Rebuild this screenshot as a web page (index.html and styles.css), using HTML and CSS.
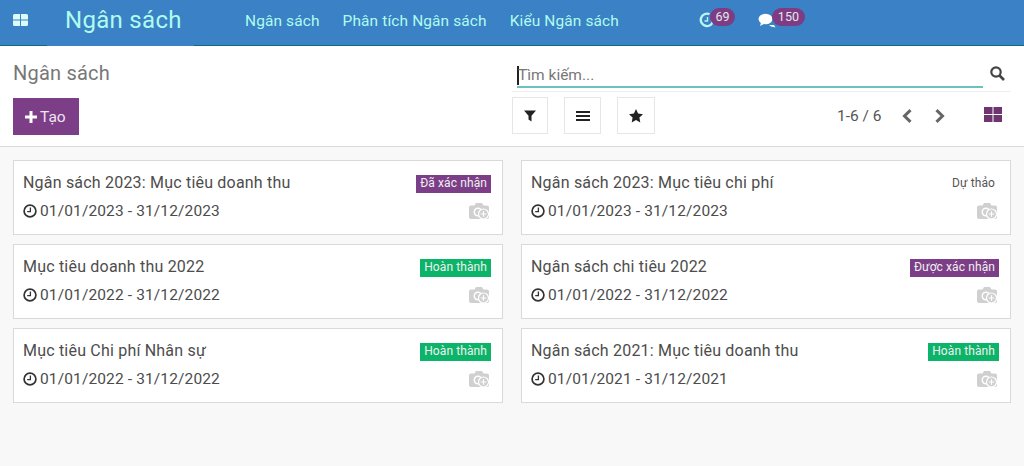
FILE: index.html
```html
<!DOCTYPE html>
<html lang="vi">
<head>
<meta charset="utf-8">
<title>Ngân sách</title>
<link rel="stylesheet" href="styles.css">
</head>
<body>
<svg class="defs" width="0" height="0" aria-hidden="true">
  <symbol id="clock" viewBox="0 0 14 14"><circle cx="7" cy="7" r="5.900" fill="none" stroke="currentColor" stroke-width="1.700"/><path d="M7.400 3.400V7.700H4.200" fill="none" stroke="currentColor" stroke-width="1.300"/></symbol>
  <symbol id="cam" viewBox="0 0 22 18"><path d="M1 5.500a2 2 0 0 1 2-2h3.500L8 1h6l1.500 2.500H19a2 2 0 0 1 2 2V15a2 2 0 0 1-2 2H3a2 2 0 0 1-2-2Z" fill="#d0d0d0"/><circle cx="10" cy="10" r="4.500" fill="#fff"/><circle cx="10" cy="10" r="3" fill="#d0d0d0"/><circle cx="15.500" cy="12" r="5" fill="#d0d0d0" stroke="#fff" stroke-width="1.200"/><path d="M15.500 9.300v5.400M12.800 12h5.400" stroke="#fff" stroke-width="1.200"/></symbol>
</svg>
<header class="navbar">
  <svg class="apps" viewBox="0 0 15 12"><path d="M0 1.500A1.500 1.500 0 0 1 1.500 0H7V5.500H0ZM8 0H13.500A1.500 1.500 0 0 1 15 1.500V5.500H8ZM0 6.500H7V12H1.500A1.500 1.500 0 0 1 0 10.500ZM8 6.500H15V10.500A1.500 1.500 0 0 1 13.500 12H8Z" fill="#dcfbf8"/></svg>
  <div class="brand">Ngân sách</div>
  <nav class="menu"><a>Ngân sách</a><a>Phân tích Ngân sách</a><a>Kiểu Ngân sách</a></nav>
  <div class="systray">
    <div class="tray tray-activity">
      <svg class="tray-clock" viewBox="0 0 16 16"><path d="M10.500 2.200A6.200 6.200 0 1 0 14.200 8" fill="none" stroke="#b9f6ee" stroke-width="2.400"/><path d="M8.500 5V9H5.500" fill="none" stroke="#b9f6ee" stroke-width="1.400"/></svg>
      <span class="count count-a">69</span>
    </div>
    <div class="tray tray-chat">
      <svg class="tray-bubble" viewBox="0 0 18 15"><ellipse cx="7.500" cy="6" rx="7" ry="5.200" fill="#fff"/><path d="M3 9.500 2 13l5-2.500ZM11 12h5l1.500 2.500L13 13.500Z" fill="#e8fffb"/></svg>
      <span class="count count-b">150</span>
    </div>
  </div>
</header>
<section class="panel">
  <div class="panel-left">
    <h1 class="crumb">Ngân sách</h1>
    <button class="create"><svg class="plus" viewBox="0 0 12 12"><path d="M4.500 0h3v4.500H12v3H7.500V12h-3V7.500H0v-3h4.500Z" fill="#fff"/></svg>Tạo</button>
  </div>
  <div class="panel-right">
    <div class="search">
      <div class="search-field"><span class="caret"></span><span class="placeholder">Tìm kiếm...</span></div>
      <svg class="search-icon" viewBox="0 0 15 15"><circle cx="6" cy="6" r="4.700" fill="none" stroke="#444" stroke-width="2.200"/><path d="M9.500 9.500 14 14" stroke="#444" stroke-width="2.600"/></svg>
    </div>
    <div class="tools">
      <button class="tool tool-filter"><svg viewBox="0 0 12 12"><path d="M0 0.500H12L7.500 5.800V11.500L4.500 9.500V5.800Z" fill="#222"/></svg></button>
      <button class="tool tool-group"><svg viewBox="0 0 14 12"><path d="M0 1h14v2H0ZM0 5h14v2H0ZM0 9h14v2H0Z" fill="#222"/></svg></button>
      <button class="tool tool-fav"><svg viewBox="0 0 14 14"><path d="M7 0 9.100 4.500 14 5.200 10.400 8.500 11.300 13.500 7 11 2.700 13.500 3.600 8.500 0 5.200 4.900 4.500Z" fill="#222"/></svg></button>
      <span class="pager">1-6 / 6</span>
      <svg class="chev chev-l" viewBox="0 0 10 14"><path d="M8.500 1.200 2.500 7 8.500 12.800" fill="none" stroke="#666" stroke-width="3"/></svg>
      <svg class="chev chev-r" viewBox="0 0 10 14"><path d="M1.500 1.200 7.500 7 1.500 12.800" fill="none" stroke="#666" stroke-width="3"/></svg>
      <svg class="kanban" viewBox="0 0 18 15"><path d="M0 0H8.500V7H0ZM9.500 0H18V7H9.500ZM0 8H8.500V15H0ZM9.500 8H18V15H9.500Z" fill="#6f3570"/></svg>
    </div>
  </div>
</section>
<main class="cards">
  <article class="card"><div class="row"><h2 class="title">Ngân sách 2023: Mục tiêu doanh thu</h2><span class="tag tag-purple">Đã xác nhận</span></div><div class="row row-date"><span class="date"><svg class="clock"><use href="#clock"/></svg>01/01/2023 - 31/12/2023</span><svg class="cam"><use href="#cam"/></svg></div></article>
  <article class="card"><div class="row"><h2 class="title">Ngân sách 2023: Mục tiêu chi phí</h2><span class="tag tag-plain">Dự thảo</span></div><div class="row row-date"><span class="date"><svg class="clock"><use href="#clock"/></svg>01/01/2023 - 31/12/2023</span><svg class="cam"><use href="#cam"/></svg></div></article>
  <article class="card"><div class="row"><h2 class="title">Mục tiêu doanh thu 2022</h2><span class="tag tag-green">Hoàn thành</span></div><div class="row row-date"><span class="date"><svg class="clock"><use href="#clock"/></svg>01/01/2022 - 31/12/2022</span><svg class="cam"><use href="#cam"/></svg></div></article>
  <article class="card"><div class="row"><h2 class="title">Ngân sách chi tiêu 2022</h2><span class="tag tag-purple">Được xác nhận</span></div><div class="row row-date"><span class="date"><svg class="clock"><use href="#clock"/></svg>01/01/2022 - 31/12/2022</span><svg class="cam"><use href="#cam"/></svg></div></article>
  <article class="card"><div class="row"><h2 class="title">Mục tiêu Chi phí Nhân sự</h2><span class="tag tag-green">Hoàn thành</span></div><div class="row row-date"><span class="date"><svg class="clock"><use href="#clock"/></svg>01/01/2022 - 31/12/2022</span><svg class="cam"><use href="#cam"/></svg></div></article>
  <article class="card"><div class="row"><h2 class="title">Ngân sách 2021: Mục tiêu doanh thu</h2><span class="tag tag-green">Hoàn thành</span></div><div class="row row-date"><span class="date"><svg class="clock"><use href="#clock"/></svg>01/01/2021 - 31/12/2021</span><svg class="cam"><use href="#cam"/></svg></div></article>
</main>
</body>
</html>
```
FILE: styles.css
```css
* { box-sizing: border-box; }
html, body { margin: 0; height: 100%; }
body { background: #f8f8f8; font-family: Roboto, "Noto Sans", sans-serif; color: #4c4c4c; overflow: hidden; }
.defs { display: block; height: 0; }

.navbar { height: 46px; background: #3a81c5; border-bottom: 1px solid #0d6c80; box-shadow: 0 1px 0 #c8f4f4; display: flex; align-items: flex-start; color: #b0fbef; }
.apps { width: 15px; height: 12px; margin: 14px 0 0 13px; }
.brand { position: relative; font-size: 24px; line-height: 34px; margin: 3px 0 0 37px; width: 180px; letter-spacing: 0.3px; }
.brand::after { content: ""; position: absolute; left: -18px; top: 42px; width: 147px; height: 1px; background: #3a81c5; }
.menu { display: flex; gap: 23px; font-size: 15.500px; line-height: 20px; margin-top: 11px; letter-spacing: 0.1px; }
.systray { display: flex; margin-left: 80px; position: relative; }
.tray { position: relative; }
.tray-activity { width: 59px; height: 30px; }
.tray-clock { width: 16px; height: 16px; position: absolute; left: 0; top: 12px; }
.tray-bubble { width: 18px; height: 15px; position: absolute; left: 0; top: 13px; }
.count { position: absolute; top: 8px; height: 18px; border-radius: 9px; background: #7d3c84; color: #e6e6e6; font-size: 12.500px; line-height: 17px; text-align: center; }
.count-a { left: 11px; width: 25px; }
.count-b { left: 14px; width: 33px; }

.panel { height: 101px; background: #fff; border-bottom: 1px solid #d9d9d9; display: flex; padding: 0 13px; }
.panel-left { width: 499px; display: flex; flex-direction: column; align-items: flex-start; }
.crumb { margin: 14px 0 0; font-size: 20px; line-height: 26px; font-weight: 400; color: #777; letter-spacing: 0.2px; }
.create { margin-top: 12px; width: 66px; height: 37px; background: #7c3f87; color: #f0e4f0; border: 0; border-radius: 0; padding: 0 0 0 12px; display: flex; align-items: center; gap: 3px; font: 15.500px Roboto, sans-serif; }
.plus { width: 12px; height: 12px; }

.panel-right { flex: 1; display: flex; flex-direction: column; }
.search { height: 46px; position: relative; border-bottom: 1px solid #eee; }
.search-field { position: absolute; left: 5px; right: 28px; top: 18px; height: 24px; border-bottom: 2px solid #6dc0bd; display: flex; align-items: center; }
.caret { width: 2px; height: 19px; background: #222; }
.placeholder { font-size: 15.500px; color: #777; margin-left: -1px; }
.search-icon { position: absolute; right: 6px; top: 20px; width: 15px; height: 15px; }

.tools { display: flex; align-items: center; height: 37px; margin-top: 5px; position: relative; }
.tool { height: 37px; background: #fff; border: 1px solid #e6e6e6; padding: 0; display: flex; align-items: center; justify-content: center; }
.tool-filter { width: 36px; margin-right: 16px; }
.tool-filter svg { width: 12px; height: 12px; }
.tool-group { width: 37px; margin-right: 16px; }
.tool-group svg { width: 14px; height: 12px; }
.tool-fav { width: 38px; margin-right: 182px; }
.tool-fav svg { width: 14px; height: 14px; }
.pager { font-size: 15.500px; color: #555; width: 64px; }
.chev { width: 10px; height: 14px; }
.chev-l { margin-left: 1px; }
.chev-r { margin-left: 23px; }
.kanban { width: 18px; height: 15px; margin-left: 39px; margin-top: -3px; }

.cards { display: grid; grid-template-columns: 490px 490px; column-gap: 18px; row-gap: 9px; padding: 13px 13px 0; }
.card { height: 75px; background: #fff; border: 1px solid #d9d9d9; padding: 11px 12px 0 9px; }
.row { display: flex; justify-content: space-between; align-items: flex-start; }
.row-date { margin-top: 7px; }
.title { margin: 0; font-size: 16px; line-height: 22px; font-weight: 400; color: #4d4d4d; letter-spacing: 0.2px; }
.date { font-size: 15.500px; line-height: 20px; display: flex; align-items: center; letter-spacing: 0.13px; }
.clock { width: 14px; height: 14px; margin-right: 3px; color: #333; }
.cam { width: 22px; height: 18px; margin-top: 1px; }
.tag { height: 18px; margin-top: 3px; margin-right: -1px; padding: 0 4px; font-size: 12px; line-height: 17px; letter-spacing: 0.1px; color: #f0f0f0; }
.tag-purple { background: #7c3f87; }
.tag-green { background: #0cb469; }
.tag-plain { color: #555; }
```
